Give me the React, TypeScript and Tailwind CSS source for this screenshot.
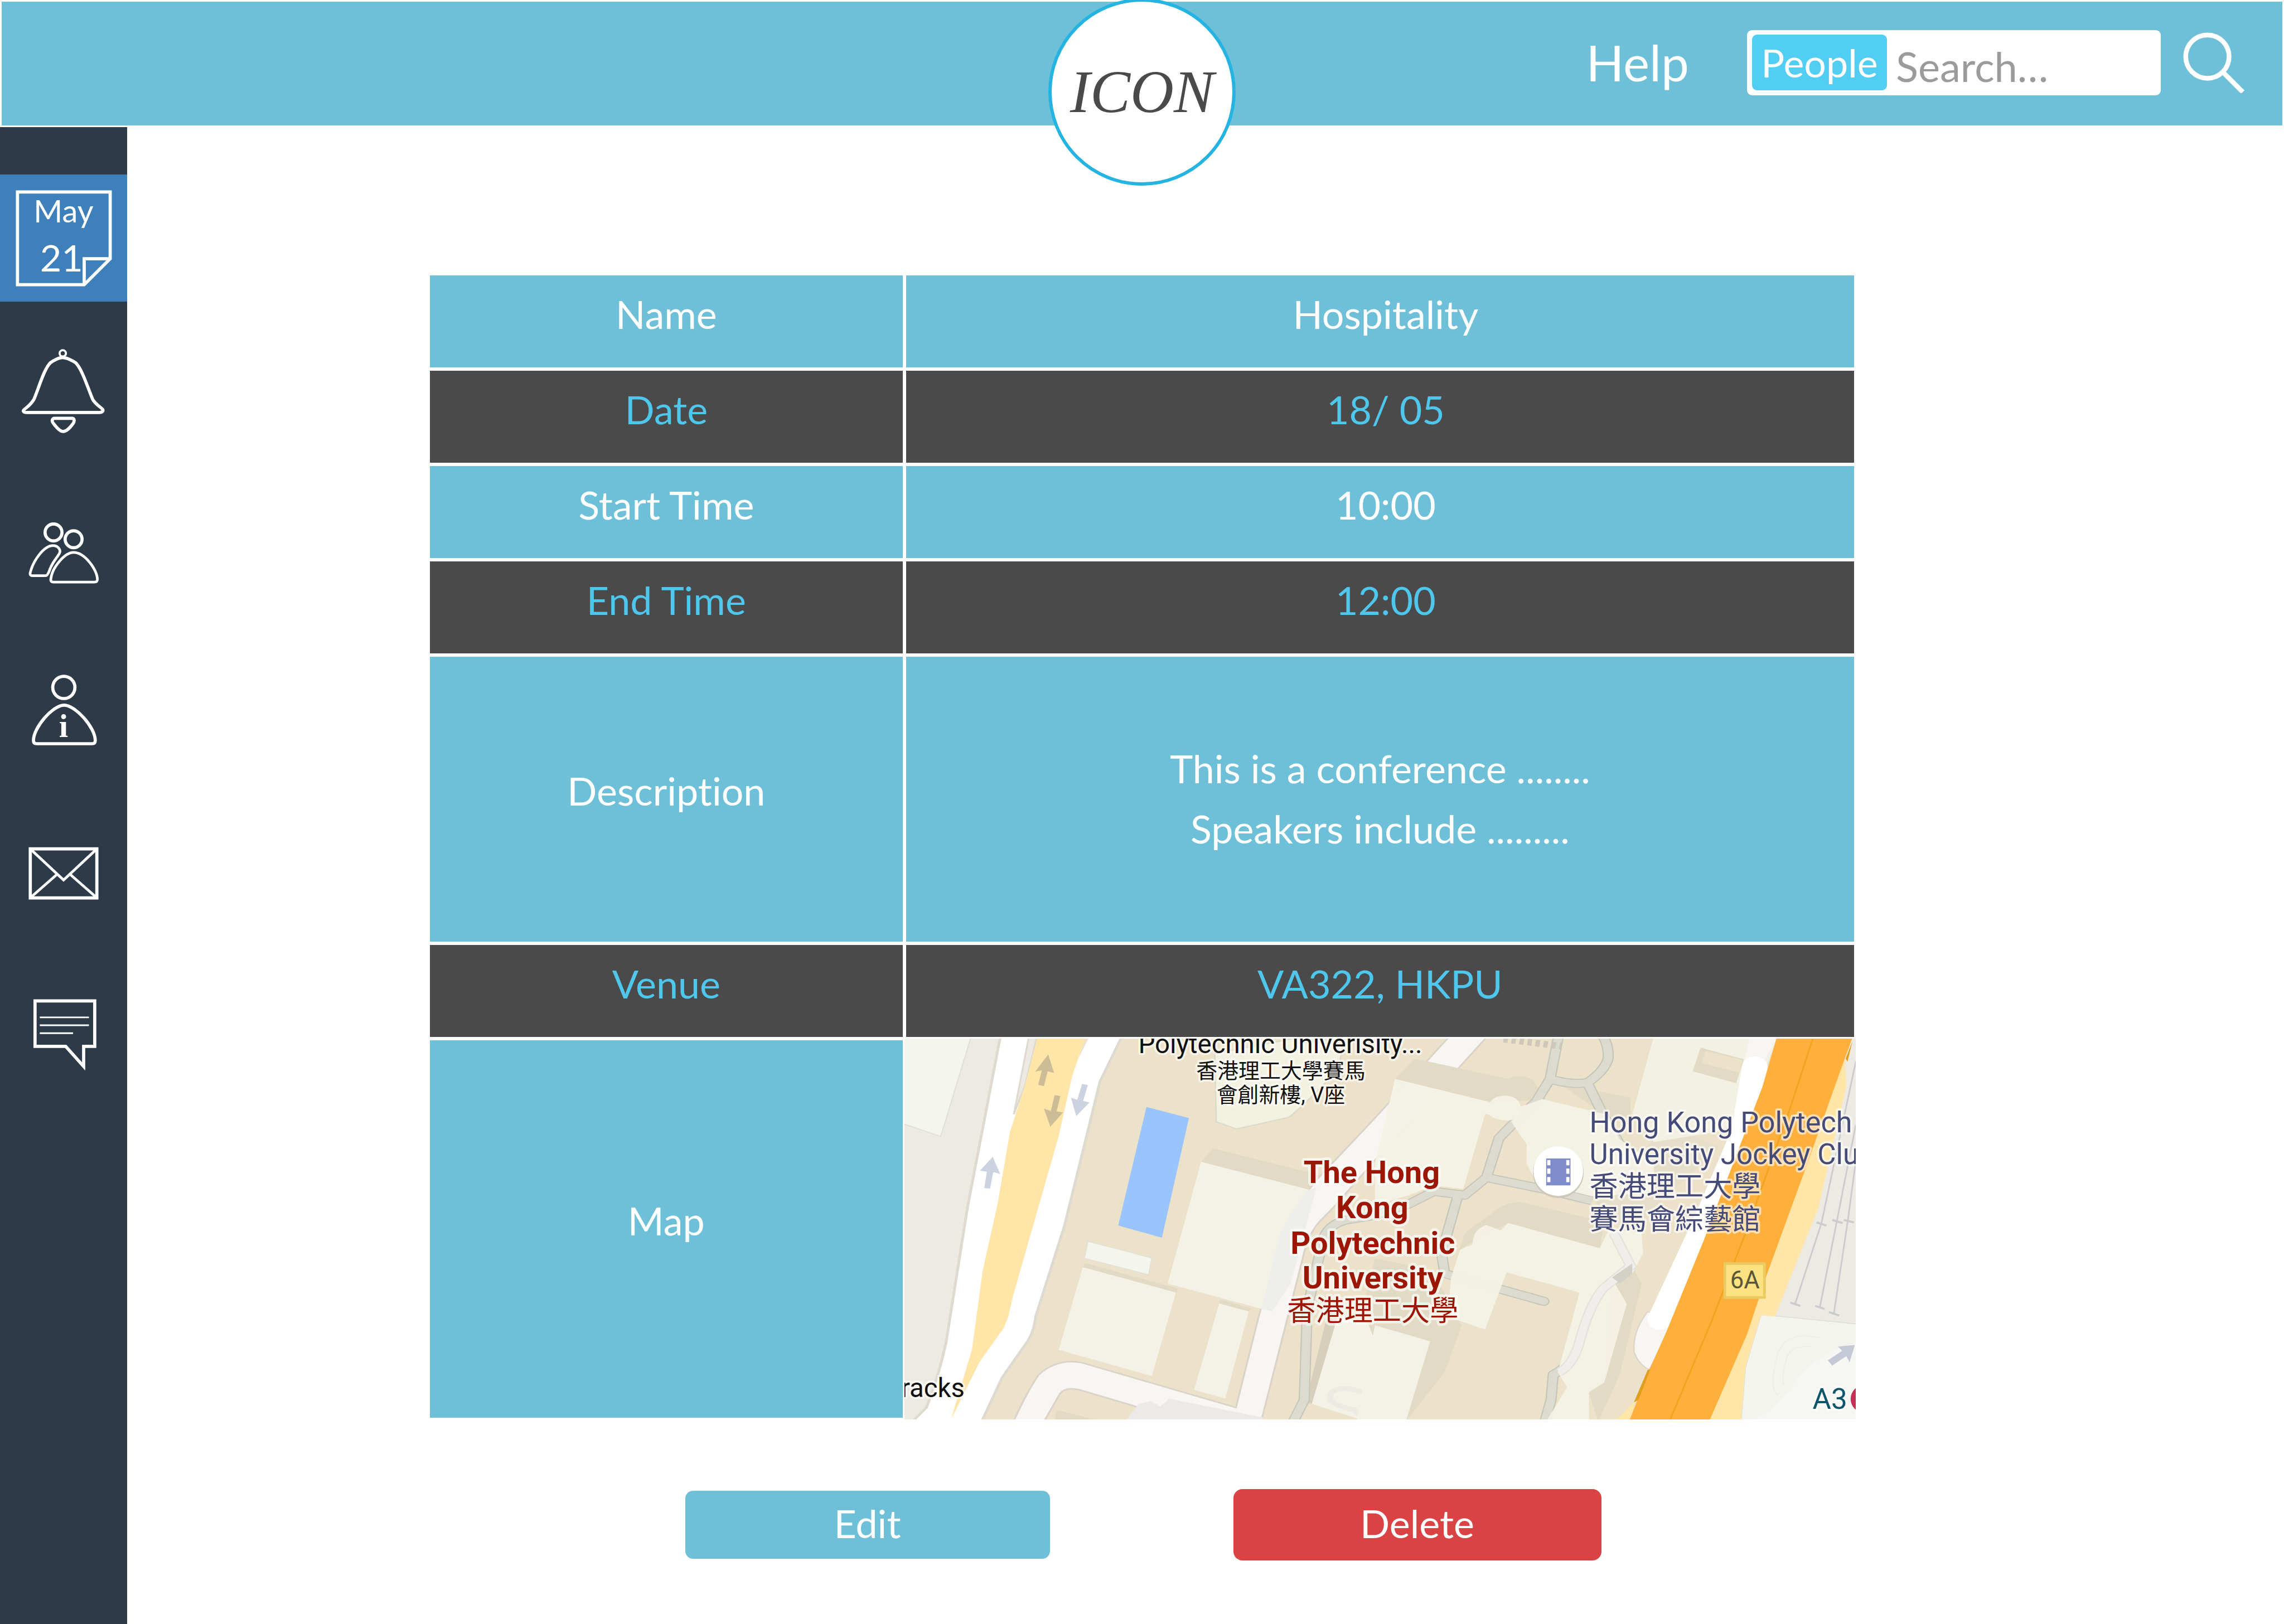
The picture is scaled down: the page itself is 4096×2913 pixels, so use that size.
import type { ReactNode } from "react";

type Row = { label: string; value: string[]; dark?: boolean; tall?: boolean; shifted?: boolean };

const rows: Row[] = [
  { label: "Name", value: ["Hospitality"], shifted: true },
  { label: "Date", value: ["18/ 05"], dark: true, shifted: true },
  { label: "Start Time", value: ["10:00"], shifted: true },
  { label: "End Time", value: ["12:00"], dark: true, shifted: true },
  { label: "Description", value: ["This is a conference ........", "Speakers include ........."], tall: true },
  { label: "Venue", value: ["VA322, HKPU"], dark: true },
];

function NavItem({ label, children }: { label: string; children: ReactNode }) {
  return (
    <a href="#" aria-label={label} className="block h-[289px]">
      <svg viewBox="0 0 240 305" className="h-full w-full" fill="none" stroke="#ffffff" strokeWidth="6">
        {children}
      </svg>
    </a>
  );
}

function Sidebar() {
  return (
    <nav aria-label="Main" className="w-[228px] shrink-0 bg-[#2d3b48] pt-[85px]">
      <a href="#" aria-label="Calendar, May 21" className="mb-4 block h-[228px] bg-[#3d80bb]">
        <svg viewBox="0 0 240 240" className="h-full w-full" fill="none" stroke="#ffffff" strokeWidth="6">
          <path d="M33 33H208V159L159 208H33Z" />
          <path d="M208 159H159V208" />
          <g fill="#ffffff" stroke="none" textAnchor="middle" className="font-[Lato,sans-serif]">
            <text x="120" y="91" fontSize="59">May</text>
            <text x="116" y="183" fontSize="70">21</text>
          </g>
        </svg>
      </a>
      <NavItem label="Notifications">
        <circle cx="118.500" cy="81" r="6" strokeWidth="4" />
        <path d="M118 89C125 89 136 94 143 99C155 111 165 144 175 168C181 178 189 182 194 187C196 191 192 193 188 193H50C44 193 42 190 46 187C53 181 58 178 64 168C74 144 83 111 95 99C101 94 112 89 118 89Z" />
        <path d="M103 204H136C141 204 141 210 138 214C132 222 126 229 119 229C113 229 107 222 101 214C97 210 98 204 103 204Z" />
      </NavItem>
      <NavItem label="People">
        <circle cx="101" cy="115" r="16" />
        <circle cx="139" cy="128" r="16" />
        <path
          d="M139 153C160 153 184 186 184 204C184 208 182 209 178 209H101C97 209 95 207 96 203C98 182 122 153 139 153Z"
          strokeWidth="5"
        />
        <path
          d="M86 197H61C57 197 56 194 57 191C62 170 82 140 100 140C109 140 116 148 112 155C107 164 98 172 93 188C91 193 89 197 86 197Z"
          strokeWidth="5"
        />
      </NavItem>
      <NavItem label="Information">
        <circle cx="120.500" cy="103.500" r="21" />
        <path d="M121 137C142 137 180 179 180 204C180 208 178 210 174 210H69C65 210 63 208 63 204C63 179 100 137 121 137Z" />
        <text
          x="120"
          y="197"
          fontSize="62"
          fontWeight="700"
          fill="#ffffff"
          stroke="none"
          textAnchor="middle"
          className="font-['Liberation_Serif',serif]"
        >
          i
        </text>
      </NavItem>
      <NavItem label="Mail">
        <path d="M57 104H183V197H57Z" />
        <path d="M59 106L120 163L181 106M59 195L108 152M181 195L132 152" strokeWidth="5" />
      </NavItem>
      <NavItem label="Messages">
        <path d="M66 87H179V173H158V211L124 173H66Z" />
        <path d="M75 118H168M75 133H168M75 148H138" strokeWidth="3" />
      </NavItem>
    </nav>
  );
}

function Header() {
  return (
    <header className="relative m-[3px] flex h-[222px] items-center justify-end bg-[#6dc0d8] pr-[68px] pb-1">
      <a
        href="#"
        className="absolute -top-1.5 left-1/2 flex size-[336px] -translate-x-1/2 items-center justify-center rounded-full border-6 border-[#25b4e1] bg-white font-['Liberation_Serif',serif] text-[108px] text-[#4a4a4a] italic"
      >
        ICON
      </a>
      <a href="#" className="mr-[104px] text-[89px] text-white">
        Help
      </a>
      <form className="flex items-center gap-10" onSubmit={(e) => e.preventDefault()}>
        <div className="flex h-[117px] w-[742px] items-center rounded-[9px] bg-white px-[9px]">
          <button type="button" className="h-[100px] w-[242px] shrink-0 rounded-[9px] bg-[#52cdf3] text-[70px] leading-[92px] text-white">
            People
          </button>
          <input
            type="text"
            aria-label="Search"
            placeholder="Search…"
            className="mt-3 min-w-0 flex-1 bg-transparent pl-4 text-[74px] text-[#4a4a4a] outline-none placeholder:text-[#9b9b9b]"
          />
        </div>
        <button type="submit" aria-label="Submit search" className="size-[110px]">
          <svg viewBox="0 0 116 116" className="h-full w-full" fill="none" stroke="#ffffff">
            <circle cx="46" cy="47" r="41" strokeWidth="9" />
            <path d="M76 77L113 114" strokeWidth="9" />
          </svg>
        </button>
      </form>
    </header>
  );
}

function VenueMap() {
  return (
    <svg viewBox="0 0 1800 721" preserveAspectRatio="xMidYMid slice" className="h-full w-full" role="img" aria-label="Map of the venue">
      <rect width="1800" height="721" fill="#ece2ca" />

      {/* western blocks */}
      <g transform="translate(-10 -14.4) scale(0.574 0.4783)">
        <path d="M0 20H340L225 700L155 1230L90 1490L20 1568H0Z" fill="#ede9e3" />
        <path d="M0 20H238L137 418L0 362Z" fill="#f3f5ee" stroke="#dfe0da" strokeWidth="4" />
        <path
          d="M334 20L225 700L155 1230Q130 1370 90 1490L40 1550H270L340 1370L425 1225Q445 1185 450 1130L545 770L662 200L735 20Z"
          fill="#ffffff"
          stroke="#dfdad0"
          strokeWidth="9"
        />
        <path d="M428 20H455L415 215L378 330Z" fill="#ede9e3" stroke="#dfdad0" strokeWidth="6" />
        <path
          d="M457 20H615L570 180L525 420L375 1050L360 1130L345 1175L265 1310L215 1430L172 1535L185 1480L240 1260L275 950L325 680L365 400L415 215Z"
          fill="#ffe6a8"
        />
        <path d="M628 20L612 30L590 110Z" fill="#ece2ca" />
        <path d="M815 301L955 345L866 818L722 770Z" fill="#99c4fd" />
        <path d="M622 832L833 898L822 965L610 900Z" fill="#f4f5ec" stroke="#e3e0d4" strokeWidth="4" />
        <path d="M612 918L920 1020L912 1040L605 937Z" fill="#e1dac4" />
        <path d="M605 935L912 1035L833 1365L526 1262Z" fill="#f4f2e6" />
        <path d="M995 518L1035 465L1400 575L1350 630Z" fill="#e1dac4" />
        <path d="M1045 360L1040 90L1300 30L1460 60L1450 150L1335 290L1285 342L1112 388Z" fill="#f3f1df" stroke="#dedac9" strokeWidth="5" />
        <path d="M1058 1062L1160 1098L1152 1112L1055 1080Z" fill="#e1dac4" />
        <path d="M1055 1078L1152 1110L1075 1455L972 1420Z" fill="#f4f2e6" />
        <path d="M1440 1120L1345 1470L1600 1568H1672L1750 1228Z" fill="#f4f2e6" />
        <path d="M1410 1130L1450 1110L1360 1475L1340 1470Z" fill="#d6cfbc" />
        <path d="M1568 1568L1500 1500Q1400 1475 1425 1430Q1470 1390 1590 1460Q1650 1510 1660 1568" fill="none" stroke="#ecebe3" strokeWidth="20" />
      </g>

      {/* campus service road */}
      <g transform="translate(-10 -14.4) scale(0.574 0.4783)" stroke="#dad3ca" strokeWidth="6">
        <path
          d="M1815 20L1568 345L1375 590L1300 710Q1260 790 1245 870L1185 1130L1110 1490L600 1312Q520 1295 460 1360Q420 1430 375 1550H475L530 1435Q550 1405 600 1422L960 1550H1192L1330 900Q1345 810 1385 755L1430 700L1568 512L1940 20Z"
          fill="#f8f5f2"
        />
        <path d="M995 518L885 1000L1195 1100L1250 850Q1265 770 1300 710L1350 628Z" fill="#f4f2e6" stroke="none" />
        <path d="M1350 628L1295 715Q1255 790 1240 870L1195 1100L1230 1110L1290 1000L1375 620Z" fill="#eeeeec" stroke="none" />
        <path d="M520 1500L850 1600H500Z" fill="#e1dac4" stroke="none" />
        <path d="M750 1537L790 1475L830 1465L860 1485L890 1455L1200 1530V1550H750Z" fill="#ebeae8" stroke="none" />
      </g>

      {/* eastern blocks */}
      <g transform="translate(890 -14.4) scale(0.5867 0.4783)">
        <path d="M130 110L430 190Q470 165 510 195L550 270L370 285L65 190Z" fill="#e1dbc5" />
        <path d="M590 205L825 265V345L745 335Z" fill="#e1dbc5" />
        <path d="M0 900L120 930L200 980L280 1165L225 1350L100 1545L-40 1100Z" fill="#e1dbc5" />
        <path d="M400 700Q440 670 480 680L740 755L725 860L430 760L320 830L270 870L290 800Z" fill="#e1dbc5" />
        <path d="M740 1390L690 1430L720 1545L790 1360L860 1000L830 930L760 980Z" fill="#e1dbc5" />
        <path d="M900 430L1000 400L1110 460L900 700L860 780L700 740L720 660Z" fill="#e5dec8" />
        <path d="M900 20H1300L1200 340L1100 400L900 440L830 330Z" fill="#f3f1e4" />
        <path d="M1050 66L1190 112L1165 207L1025 160Z" fill="#e1dbc5" />
        <path d="M1065 80L1185 115L1175 165L1055 128Z" fill="#ece2ca" />
        <path d="M0 1165L178 1228L100 1545H-60Z" fill="#f4f2e6" />
      </g>

      {/* footpaths, drawn as a casing with a lighter core */}
      <g transform="translate(890 -14.4) scale(0.5867 0.4783)" fill="none" strokeLinejoin="round">
        {[
          { color: "#c6c5ba", width: 36 },
          { color: "#dbdbcf", width: 28 },
        ].map((line) => (
          <g key={line.color} stroke={line.color} strokeWidth={line.width}>
            <path d="M-265 1550L-228 1460L-218 1100L-172 850Q-160 760 -80 745L0 730L110 685L190 635L290 650L360 580L400 425L460 350L520 280L565 190L592 20" />
            <path d="M565 190Q630 215 685 205Q740 160 752 110Q755 60 735 20" />
            <path d="M685 205L735 330L790 450" />
            <path d="M268 650L215 880L225 960L545 1070" strokeLinecap="round" />
            <path d="M360 580L560 630L700 672" />
            <path d="M770 800L825 930L735 1020Q690 1090 660 1230Q640 1320 575 1360L568 1460L545 1560" />
          </g>
        ))}
      </g>

      <g transform="translate(890 -14.4) scale(0.5867 0.4783)">
        <path
          d="M65 190L372 282Q385 255 425 256Q465 262 470 300Q470 345 430 355Q390 355 365 330L355 330L285 625L190 612L110 650L0 690V520Z"
          fill="#f4f2e6"
          fillOpacity="0.94"
        />
        <path d="M470 300L540 270L745 330L790 430L900 520L900 640L700 655L520 600L488 520L490 450L440 360Z" fill="#f4f2e6" fillOpacity="0.94" />
        <path
          d="M430 760L725 860L755 785L860 800L865 880L830 960L765 980L812 1080L740 1390L690 1430V1550H550L620 1410L590 1350L660 1035L425 955L355 1182L235 1130L245 980L275 865L315 845Q315 785 360 768L405 790Z"
          fill="#f4f2e6"
          fillOpacity="0.94"
        />
        <path d="M770 800L825 930L735 1020Q690 1090 660 1230Q640 1320 595 1350" fill="none" stroke="#e3e2da" strokeWidth="34" />
        <path d="M770 800L825 930L735 1020Q690 1090 660 1230Q640 1320 595 1350" fill="none" stroke="#efeeea" strokeWidth="26" />
        <path d="M830 920V960L790 1000L765 975Z" fill="#d2d1c6" />
        <path d="M415 33L600 60" stroke="#cfc8ba" strokeWidth="26" strokeDasharray="14 12" />

        {/* railway yard */}
        <path d="M1500 20H1560V1170L1245 1125Z" fill="#ede9e3" />
        <g stroke="#c9cbcd" strokeWidth="5" fill="none">
          <path d="M1551 120L1440 760L1355 1080M1551 370L1490 750L1435 1092M1560 430L1525 750L1480 1118" />
          <path d="M1340 1075L1372 1088M1420 1088L1450 1100M1464 1112L1497 1126M1424 758L1456 770M1475 748L1508 760M1512 748L1545 758" strokeWidth="8" />
        </g>
        <path d="M1245 1122L1560 1160V1550H1180L1195 1330Z" fill="#f3f4ee" stroke="#dfdfda" strokeWidth="4" />
        <path d="M1440 1215Q1310 1180 1295 1300Q1270 1420 1300 1440M1410 1250Q1330 1240 1325 1310Q1310 1380 1320 1400" fill="none" stroke="#edeee8" strokeWidth="4" />
        <path d="M1200 1550Q1300 1500 1360 1380Q1430 1270 1560 1230V1550Z" fill="#f6f6f2" />

        {/* motorway */}
        <path d="M1210 20H1300L1200 240L1180 180Z" fill="#f8f5f2" />
        <path d="M880 1110Q830 1190 836 1270Q850 1320 885 1340L960 1160Z" fill="#f8f5f2" stroke="#dcd3cb" strokeWidth="4" />
        <path d="M1225 142L1190 400L1065 760L920 1142" fill="none" stroke="#ffffff" strokeWidth="82" strokeLinecap="round" strokeLinejoin="round" />
        <path d="M1515 90L1520 220L1430 700L1290 1130L1245 1125L1195 1330L1180 1550H1075Z" fill="#ffe6a8" />
        <path d="M840 1465L770 1550H825Z" fill="#ffe6a8" />
        <path d="M1297 20L1250 220L1060 830L940 1190L885 1340L818 1550H1076L1200 1200L1265 960L1390 540L1515 110L1542 20Z" fill="#ffaf3b" />
        <path d="M1415 20L1335 320L1195 800L1085 1150L948 1550" fill="none" stroke="#eca71f" strokeWidth="5" />
        <path d="M880 1340L835 1470L850 1460L888 1340ZM1540 40L1518 110L1524 122Z" fill="#e0a01f" />
      </g>

      {/* one-way arrows */}
      <g>
        <path d="M272 30L283 65L271 62L264 90L253 88L260 60L247 63Z" fill="#cdbd97" />
        <path d="M276 167L264 133L277 137L284 107L295 109L288 138L300 140Z" fill="#cdbd97" />
        <path d="M325 147L315 112L327 116L336 86L347 88L338 118L350 121Z" fill="#ccd2e0" />
        <path d="M167 224L181 256L168 253L162 284L151 283L156 252L143 250Z" fill="#ccd2e0" />
        <path d="M1798 580L1766 583L1774 591L1747 609L1755 619L1782 601L1788 613Z" fill="#c5c9d6" />
      </g>

      {/* cinema marker */}
      <circle cx="1237" cy="254" r="48" fill="#cfc8b8" />
      <circle cx="1237" cy="251" r="47" fill="#ffffff" />
      <path d="M1214 227H1260V278H1214Z" fill="#7f8ccb" />
      <path d="M1219 230V278M1255 230V278" stroke="#ffffff" strokeWidth="6" strokeDasharray="10 6" />

      {/* road shield */}
      <rect x="1552" y="426" width="75" height="64" fill="#fde281" stroke="#ebca62" strokeWidth="5" />

      <g className="font-[Roboto,'Noto_Sans_CJK_TC',sans-serif]" paintOrder="stroke" strokeLinejoin="round" stroke="#ffffff" strokeOpacity="0.6">
        <text x="1590" y="473" fontSize="46" fill="#5a5638" stroke="none" textAnchor="middle">6A</text>
        <g fill="#111111" textAnchor="middle" strokeWidth="8">
          <text x="711" y="28" fontSize="50">Polytechnic Univerisity...</text>
          <text x="712" y="75" fontSize="40">香港理工大學賽馬</text>
          <text x="712" y="120" fontSize="40">會創新樓, V座</text>
        </g>
        <g fill="#9d1503" textAnchor="middle" strokeWidth="10" fontSize="59">
          <g fontWeight="700">
            <text x="884" y="274">The Hong</text>
            <text x="885" y="340">Kong</text>
            <text x="886" y="407">Polytechnic</text>
            <text x="886" y="473">University</text>
          </g>
          <text x="886" y="534" fontSize="54">香港理工大學</text>
        </g>
        <g fill="#454b78" strokeWidth="8" fontSize="54">
          <text x="1296" y="177" fontSize="55">Hong Kong Polytech</text>
          <text x="1296" y="238">University Jockey Club</text>
          <text x="1296" y="299">香港理工大學</text>
          <text x="1296" y="361">賽馬會綜藝館</text>
        </g>
        <text x="114" y="679" fontSize="50" fill="#111111" strokeWidth="8" textAnchor="end">racks</text>
        <text x="1718" y="701" fontSize="54" fill="#0d556b" strokeWidth="8">A3</text>
      </g>
      <circle cx="1816" cy="682" r="26" fill="#c43152" />
    </svg>
  );
}

function DetailsTable() {
  return (
    <table className="w-full table-fixed border-separate border-spacing-1.5 text-center text-[70px] leading-[108px] font-normal">
      <colgroup>
        <col className="w-[33.27%]" />
        <col />
      </colgroup>
      <tbody>
        {rows.map((row) => (
          <tr
            key={row.label}
            className={`${row.tall ? "h-[511px]" : "h-[165px]"} ${row.dark ? "bg-[#4a4a4a] text-[#4fc6ec]" : "bg-[#6dc0d8] text-white"}`}
          >
            <th scope="row" className={row.tall ? "p-0 pb-8 font-normal" : "p-0 pb-7 font-normal"}>
              {row.label}
            </th>
            <td className={row.tall ? "p-0 pb-1" : row.shifted ? "p-0 pb-7 pl-5" : "p-0 pb-7"}>
              {row.value.map((line) => (
                <p key={line}>{line}</p>
              ))}
            </td>
          </tr>
        ))}
        <tr className="text-white">
          <th scope="row" className="bg-[#6dc0d8] p-0 pb-8 font-normal">
            Map
          </th>
          <td className="p-0">
            <div className="-m-[3px] h-[683px] overflow-hidden">
              <VenueMap />
            </div>
          </td>
        </tr>
      </tbody>
    </table>
  );
}

export default function App() {
  return (
    <div className="flex min-h-screen flex-col bg-white font-[Lato,sans-serif] [font-variant-ligatures:no-common-ligatures]">
      <Header />
      <div className="flex flex-1">
        <Sidebar />
        <main className="min-w-0 flex-1 pt-[260px] pr-[765px] pl-[537px]">
          <DetailsTable />
          <div className="mt-[122px] flex items-center justify-center gap-[329px] pl-1 text-[70px] text-white">
            <button type="button" className="h-[122px] w-[654px] rounded-[14px] bg-[#6dc0d8] pb-1.5">
              Edit
            </button>
            <button type="button" className="h-32 w-[660px] rounded-[16px] bg-[#d94343] pb-1.5">
              Delete
            </button>
          </div>
        </main>
      </div>
    </div>
  );
}
